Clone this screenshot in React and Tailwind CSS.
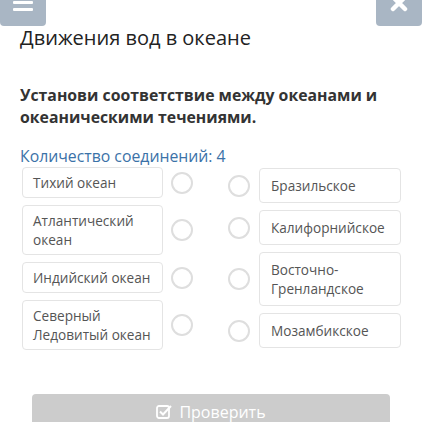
import React from "react";

const left = ["Тихий океан", "Атлантический\nокеан", "Индийский океан", "Северный\nЛедовитый океан"];
const right = ["Бразильское", "Калифорнийское", "Восточно-\nГренландское", "Мозамбикское"];

export default function App() {
  return (
    <div className="w-[422px] h-[422px] overflow-hidden bg-white relative" style={{ fontFamily: '"Open Sans", "Noto Sans", sans-serif' }}>
      <div className="flex justify-between h-6">
        <div className="w-[46px] h-[26px] bg-[#a9b6c4] rounded-b-[4px] relative overflow-hidden">
          <div className="absolute left-[13px] top-[1px] w-[20px] h-[3px] bg-white rounded-[1px]" />
          <div className="absolute left-[13px] top-[8px] w-[20px] h-[3px] bg-white rounded-[1px]" />
        </div>
        <div className="w-[46px] h-[26px] bg-[#a9b6c4] rounded-b-[4px] relative overflow-hidden">
          <svg className="absolute left-[14px] top-[-6px]" width="18" height="18" viewBox="0 0 18 18">
            <path d="M3 3 L15 15 M15 3 L3 15" stroke="white" strokeWidth="4.5" strokeLinecap="round" />
          </svg>
        </div>
      </div>
      <h1 className="pl-5 text-[20px] leading-[28px] text-[#222]">Движения вод в океане</h1>
      <p className="mt-8 pl-5 pr-4 text-[15.8px] leading-[22px] font-bold text-[#333]">
        Установи соответствие между океанами и океаническими течениями.
      </p>
      <p className="mt-[17px] pl-5 text-[15.8px] leading-[22px] text-[#3b72a8]">Количество соединений: 4</p>
      <div className="flex ml-[22px]">
        <div className="flex flex-col gap-[7px]">
          {left.map((t) => (
            <div key={t} className="flex items-center gap-[8px]">
              <div className="w-[141px] border border-[#e4e4e4] rounded-[4px] px-[10px] py-[5px] text-[13.6px] leading-[19px] text-[#555] whitespace-pre">
                {t}
              </div>
              <div className="w-[22px] h-[22px] rounded-full border-2 border-[#dedede]" />
            </div>
          ))}
        </div>
        <div className="flex flex-col gap-[7px] ml-[35px] mt-px">
          {right.map((t) => (
            <div key={t} className="flex items-center gap-[9px]">
              <div className="w-[22px] h-[22px] rounded-full border-2 border-[#dedede]" />
              <div className="w-[142px] border border-[#e4e4e4] rounded-[4px] px-[11px] py-[7px] text-[13.6px] leading-[19px] text-[#555] whitespace-pre">
                {t}
              </div>
            </div>
          ))}
        </div>
      </div>
      <div className="mt-[44px] ml-[32px] w-[358px] h-[40px] bg-[#cccccc] rounded-[4px] flex items-center justify-center gap-[7px] text-white text-[16px]">
        <svg width="16" height="16" viewBox="0 0 16 16" className="mt-[-4px]">
          <rect x="1" y="2" width="12" height="12" rx="2" fill="none" stroke="white" strokeWidth="1.8" />
          <path d="M4 7.5 L7 10.5 L15 2" fill="none" stroke="white" strokeWidth="2" />
        </svg>
        <span className="mt-[-4px]">Проверить</span>
      </div>
    </div>
  );
}
